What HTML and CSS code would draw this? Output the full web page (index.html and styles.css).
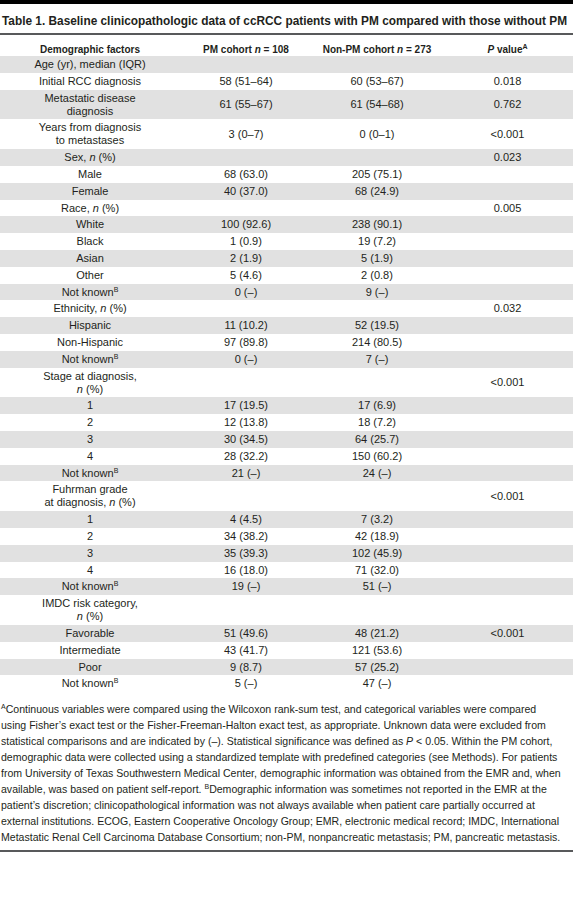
FILE: index.html
```html
<!DOCTYPE html>
<html lang="en">
<head>
  <meta charset="UTF-8" />
  <meta name="viewport" content="width=device-width, initial-scale=1.0"/>
  <title>Table 1</title>
  <link rel="stylesheet" href="styles.css">
</head>
<body>
  <div class="table-wrap">
    <h1 class="table-title">Table 1. Baseline clinicopathologic data of ccRCC patients with PM compared with those without PM</h1>
    <table class="data-table">
      <colgroup>
        <col class="col-factor">
        <col class="col-pm">
        <col class="col-nonpm">
        <col class="col-p">
      </colgroup>
      <thead>
        <tr>
          <th>Demographic factors</th>
          <th>PM cohort <i>n</i> = 108</th>
          <th>Non-PM cohort <i>n</i> = 273</th>
          <th><i>P</i> value<sup>A</sup></th>
        </tr>
      </thead>
      <tbody>
        <tr><td>Age (yr), median (IQR)</td><td></td><td></td><td></td></tr>
        <tr><td>Initial RCC diagnosis</td><td>58 (51–64)</td><td>60 (53–67)</td><td>0.018</td></tr>
        <tr><td>Metastatic disease<br>diagnosis</td><td>61 (55–67)</td><td>61 (54–68)</td><td>0.762</td></tr>
        <tr><td>Years from diagnosis<br>to metastases</td><td>3 (0–7)</td><td>0 (0–1)</td><td>&lt;0.001</td></tr>
        <tr><td>Sex, <i>n</i> (%)</td><td></td><td></td><td>0.023</td></tr>
        <tr><td>Male</td><td>68 (63.0)</td><td>205 (75.1)</td><td></td></tr>
        <tr><td>Female</td><td>40 (37.0)</td><td>68 (24.9)</td><td></td></tr>
        <tr><td>Race, <i>n</i> (%)</td><td></td><td></td><td>0.005</td></tr>
        <tr><td>White</td><td>100 (92.6)</td><td>238 (90.1)</td><td></td></tr>
        <tr><td>Black</td><td>1 (0.9)</td><td>19 (7.2)</td><td></td></tr>
        <tr><td>Asian</td><td>2 (1.9)</td><td>5 (1.9)</td><td></td></tr>
        <tr><td>Other</td><td>5 (4.6)</td><td>2 (0.8)</td><td></td></tr>
        <tr><td>Not known<sup>B</sup></td><td>0 (–)</td><td>9 (–)</td><td></td></tr>
        <tr><td>Ethnicity, <i>n</i> (%)</td><td></td><td></td><td>0.032</td></tr>
        <tr><td>Hispanic</td><td>11 (10.2)</td><td>52 (19.5)</td><td></td></tr>
        <tr><td>Non-Hispanic</td><td>97 (89.8)</td><td>214 (80.5)</td><td></td></tr>
        <tr><td>Not known<sup>B</sup></td><td>0 (–)</td><td>7 (–)</td><td></td></tr>
        <tr><td>Stage at diagnosis,<br><i>n</i> (%)</td><td></td><td></td><td>&lt;0.001</td></tr>
        <tr><td>1</td><td>17 (19.5)</td><td>17 (6.9)</td><td></td></tr>
        <tr><td>2</td><td>12 (13.8)</td><td>18 (7.2)</td><td></td></tr>
        <tr><td>3</td><td>30 (34.5)</td><td>64 (25.7)</td><td></td></tr>
        <tr><td>4</td><td>28 (32.2)</td><td>150 (60.2)</td><td></td></tr>
        <tr><td>Not known<sup>B</sup></td><td>21 (–)</td><td>24 (–)</td><td></td></tr>
        <tr><td>Fuhrman grade<br>at diagnosis, <i>n</i> (%)</td><td></td><td></td><td>&lt;0.001</td></tr>
        <tr><td>1</td><td>4 (4.5)</td><td>7 (3.2)</td><td></td></tr>
        <tr><td>2</td><td>34 (38.2)</td><td>42 (18.9)</td><td></td></tr>
        <tr><td>3</td><td>35 (39.3)</td><td>102 (45.9)</td><td></td></tr>
        <tr><td>4</td><td>16 (18.0)</td><td>71 (32.0)</td><td></td></tr>
        <tr><td>Not known<sup>B</sup></td><td>19 (–)</td><td>51 (–)</td><td></td></tr>
        <tr><td>IMDC risk category,<br><i>n</i> (%)</td><td></td><td></td><td></td></tr>
        <tr><td>Favorable</td><td>51 (49.6)</td><td>48 (21.2)</td><td>&lt;0.001</td></tr>
        <tr><td>Intermediate</td><td>43 (41.7)</td><td>121 (53.6)</td><td></td></tr>
        <tr><td>Poor</td><td>9 (8.7)</td><td>57 (25.2)</td><td></td></tr>
        <tr><td>Not known<sup>B</sup></td><td>5 (–)</td><td>47 (–)</td><td></td></tr>
      </tbody>
    </table>
    <p class="table-notes"><sup>A</sup>Continuous variables were compared using the Wilcoxon rank-sum test, and categorical variables were compared<br>using Fisher’s exact test or the Fisher-Freeman-Halton exact test, as appropriate. Unknown data were excluded from<br>statistical comparisons and are indicated by (–). Statistical significance was defined as <i>P</i> &lt; 0.05. Within the PM cohort,<br>demographic data were collected using a standardized template with predefined categories (see Methods). For patients<br>from University of Texas Southwestern Medical Center, demographic information was obtained from the EMR and, when<br>available, was based on patient self-report. <sup>B</sup>Demographic information was sometimes not reported in the EMR at the<br>patient’s discretion; clinicopathological information was not always available when patient care partially occurred at<br>external institutions. ECOG, Eastern Cooperative Oncology Group; EMR, electronic medical record; IMDC, International<br>Metastatic Renal Cell Carcinoma Database Consortium; non-PM, nonpancreatic metastasis; PM, pancreatic metastasis.</p>
  </div>
</body>
</html>
```

FILE: styles.css
```css
body {
  margin: 0;
  font-family: 'Liberation Sans', Arial, sans-serif;
  color: #231f20;
  background-color: #fff;
}
.table-wrap {
  border-top: 4px solid #000;
  border-bottom: 2px solid #58595b;
  padding-bottom: 5px;
}
.table-title {
  margin: 0;
  padding: 9px 0 4px 2px;
  font-size: 11.85px;
  line-height: 16px;
  font-weight: bold;
  white-space: nowrap;
  border-bottom: 2px solid #58595b;
}
.data-table {
  width: 100%;
  border-collapse: collapse;
  table-layout: fixed;
  font-size: 11px;
  line-height: 13px;
}
.col-factor { width: 180px; }
.col-pm { width: 132px; }
.col-nonpm { width: 130px; }
.col-p { width: 131px; }
.data-table th {
  font-size: 10px;
  font-weight: bold;
  padding: 8px 0 0;
  text-align: center;
}
.data-table td {
  padding: 2px 0 1.8px;
  text-align: center;
  vertical-align: middle;
}
.data-table tbody tr:nth-child(odd) {
  background-color: #e1e1e1;
}
sup {
  font-size: 7px;
  line-height: 0;
  vertical-align: 4px;
}
.table-notes {
  margin: 9px 0 0;
  padding: 0 0 0 1px;
  font-size: 10.55px;
  line-height: 16px;
  white-space: nowrap;
}
```
